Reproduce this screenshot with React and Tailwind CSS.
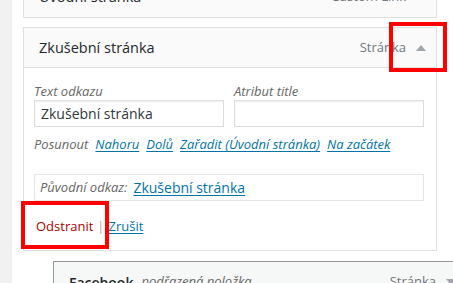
function Arrow({ className = '' }) {
  return (
    <svg width="10" height="6" viewBox="0 0 10 6" className={className}>
      <path d="M0 6 L5 0 L10 6 Z" fill="#a0a5aa" />
    </svg>
  )
}

function Link({ children }) {
  return <a className="text-[#0073aa] underline underline-offset-[2px]">{children}</a>
}

export default function App() {
  return (
    <div className="relative flex h-[283px] w-[453px] overflow-hidden bg-white font-['Open_Sans',sans-serif] text-[#23282d]">
      <div className="w-[12px] shrink-0 bg-[#f1f1f1]" />

      <div className="flex-1 pl-[11px]">
        {/* Úvodní stránka — scrolled partly out of view */}
        <div className="-mt-[24px] w-[414px] border border-[#dfdfdf] bg-[#fafafa]">
          <div className="flex h-[40px] items-center pl-[15px] pr-[10px]">
            <span className="text-[14.5px] font-medium">Úvodní stránka</span>
            <span className="ml-auto text-[13px] text-[#72777c]">Custom Link</span>
            <Arrow className="ml-[10px] rotate-180" />
          </div>
        </div>

        {/* Zkušební stránka — expanded */}
        <div className="mt-[9px] w-[414px] border border-[#dfdfdf]">
          <div className="flex h-[40px] items-center border-b border-[#dfdfdf] bg-[#fafafa] pl-[15px] pr-[10px]">
            <span className="text-[14.5px] font-medium">Zkušební stránka</span>
            <span className="ml-auto text-[13px] text-[#72777c]">Stránka</span>
            <Arrow className="ml-[10px]" />
          </div>

          <div className="bg-white pl-[10px] pt-[14px] pb-[15px]">
            <div className="flex gap-[10px]">
              <div className="w-[190px]">
                <div className="h-[18px] text-[13px] leading-[18px] italic text-[#666]">Text odkazu</div>
                <div className="flex h-[27px] items-center border border-[#ddd] px-[6px] text-[14px] text-[#32373c] shadow-[inset_0_1px_2px_rgba(0,0,0,0.07)]">
                  Zkušební stránka
                </div>
              </div>
              <div className="w-[190px]">
                <div className="h-[18px] text-[13px] leading-[18px] italic text-[#666]">Atribut title</div>
                <div className="h-[27px] border border-[#ddd] shadow-[inset_0_1px_2px_rgba(0,0,0,0.07)]" />
              </div>
            </div>

            <div className="mt-[8px] flex h-[18px] items-center gap-[7px] text-[13px] leading-[18px] italic">
              <span className="text-[#666]">Posunout</span>
              <Link>Nahoru</Link>
              <Link>Dolů</Link>
              <Link>Zařadit (Úvodní stránka)</Link>
              <Link>Na začátek</Link>
            </div>

            <div className="mt-[21px] flex h-[27px] w-[390px] items-center border border-[#e5e5e5] pl-[5px]">
              <span className="text-[13px] italic text-[#666]">Původní odkaz:</span>
              <span className="ml-[6px] text-[14px]"><Link>Zkušební stránka</Link></span>
            </div>

            <div className="mt-[16px] flex h-[18px] items-center pl-[2px] text-[13px] leading-[18px]">
              <span className="text-[#a00]">Odstranit</span>
              <span className="mx-[4px] text-[#c8a97e]">|</span>
              <Link>Zrušit</Link>
            </div>
          </div>
        </div>

        {/* Facebook — child item */}
        <div className="ml-[30px] mt-[10px] w-[414px] border border-[#999] bg-[#f6f7f7]">
          <div className="flex h-[40px] items-center pl-[15px] pr-[10px]">
            <span className="text-[14px] font-semibold">Facebook</span>
            <span className="ml-[8px] text-[13px] italic text-[#666]">podřazená položka</span>
            <span className="ml-auto text-[13px] text-[#72777c]">Stránka</span>
            <Arrow className="ml-[10px] rotate-180" />
          </div>
        </div>
      </div>

      {/* red annotation boxes */}
      <div className="pointer-events-none absolute left-[389px] top-[22px] h-[50px] w-[58px] border-[4px] border-[#ff0000]" />
      <div className="pointer-events-none absolute left-[21px] top-[201px] h-[48px] w-[88px] border-[4px] border-[#ff0000]" />
    </div>
  )
}
